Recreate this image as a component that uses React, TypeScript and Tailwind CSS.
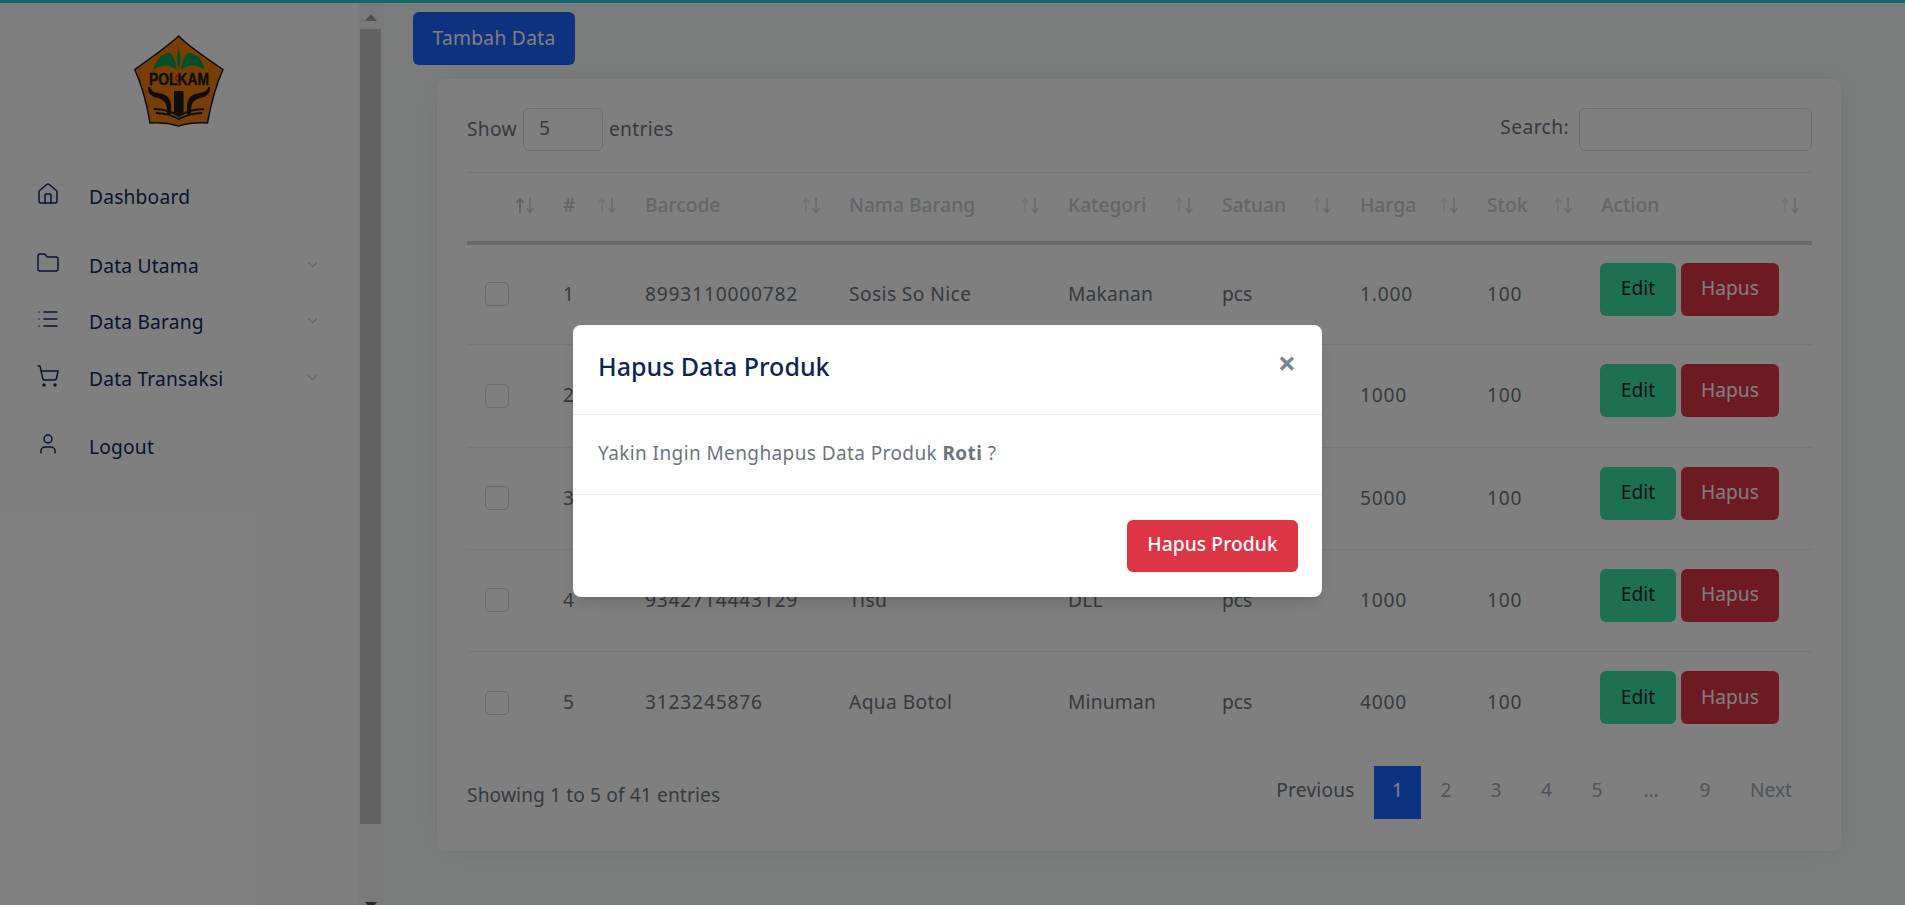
import { ChevronDown, Folder, House, List, ShoppingCart, User } from "lucide-react";

const rows = [
  { no: 1, barcode: "8993110000782", nama: "Sosis So Nice", kategori: "Makanan", satuan: "pcs", harga: "1.000", stok: 100 },
  { no: 2, barcode: "8992761136208", nama: "Roti", kategori: "Makanan", satuan: "pcs", harga: "1000", stok: 100 },
  { no: 3, barcode: "8886008101053", nama: "Sabun Mandi", kategori: "DLL", satuan: "pcs", harga: "5000", stok: 100 },
  { no: 4, barcode: "9342714443129", nama: "Tisu", kategori: "DLL", satuan: "pcs", harga: "1000", stok: 100 },
  { no: 5, barcode: "3123245876", nama: "Aqua Botol", kategori: "Minuman", satuan: "pcs", harga: "4000", stok: 100 },
];

const columns = [
  { label: "", width: "w-[80px]" },
  { label: "#", width: "w-[82px]" },
  { label: "Barcode", width: "w-[204px]" },
  { label: "Nama Barang", width: "w-[219px]" },
  { label: "Kategori", width: "w-[154px]" },
  { label: "Satuan", width: "w-[138px]" },
  { label: "Harga", width: "w-[127px]" },
  { label: "Stok", width: "w-[114px]" },
  { label: "Action", width: "w-[227px]" },
];

const pages = [
  { label: "2", className: "w-[50px]" },
  { label: "3", className: "w-[50px]" },
  { label: "4", className: "w-[51px]" },
  { label: "5", className: "w-[50px]" },
  { label: "…", className: "w-[58px] text-[#212529]" },
  { label: "9", className: "w-[50px]" },
];

function Logo() {
  return (
    <svg viewBox="0 0 120 120" className="w-[120px] h-[120px]">
      <path d="M58.700 16 Q68 26 103 49.500 Q93 72 87.500 103 Q72 102 58.700 106 Q45 102 30 103 Q25 72 14.700 49.500 Q48 26 58.700 16Z" fill="#f07c08" stroke="#1a1a1a" strokeWidth="1.500" />
      <path d="M33 50 Q38 33 50 33 Q56 38 56.500 50 Q46 41 33 50Z" fill="#0f9a50" />
      <path d="M85 50 Q80 33 68 33 Q62 38 61 50 Q72 41 85 50Z" fill="#0f9a50" />
      <path d="M58.700 50 Q55 38 58.700 28 Q62.500 38 58.700 50Z" fill="#0f9a50" />
      <text x="59" y="65" textAnchor="middle" fontFamily="'Liberation Sans', sans-serif" fontSize="16" fontWeight="700" fill="#1a1a1a" stroke="#1a1a1a" strokeWidth="0.400" textLength="60" lengthAdjust="spacingAndGlyphs">POLKAM</text>
      <path d="M55 58 L60 53 M55 58 L60 64" stroke="#c0262d" strokeWidth="1.200" fill="none" />
      <path d="M54 71 H63.500 V95 H54Z M28 67 Q27 76 38 78 Q46 80 47 88 V94 H51 V85 Q50 74 38 73 Q31 72 30 67Z M90 67 Q91 76 80 78 Q72 80 71 88 V94 H67 V85 Q68 74 80 73 Q87 72 88 67Z" fill="#1a1a1a" />
      <path d="M34 88 Q48 88 58.700 95 Q70 88 84 88 V90 Q70 90 58.700 97 Q48 90 34 90Z M36 92 Q48 92 58.700 98 Q70 92 82 92 V94 Q70 94 58.700 100 Q48 94 36 94Z" fill="#1a1a1a" />
    </svg>
  );
}

function SortArrows({ active }: { active?: boolean }) {
  return (
    <span className="absolute right-[12px] top-[24px] flex">
      <svg viewBox="0 0 10 18" className={`w-[10px] h-[17px] ${active ? "text-[#bcc2c7]" : "text-[#e6e9ec]"}`} fill="none" stroke="currentColor" strokeWidth="1.800">
        <path d="M5 17V2M1.500 6 5 1.500 8.500 6" />
      </svg>
      <svg viewBox="0 0 10 18" className="w-[10px] h-[17px] text-[#d3d8dc]" fill="none" stroke="currentColor" strokeWidth="1.800">
        <path d="M5 1v15M1.500 12 5 16.500 8.500 12" />
      </svg>
    </span>
  );
}

function MenuItem({ icon, label, arrow, className }: { icon: React.ReactNode; label: string; arrow?: boolean; className?: string }) {
  return (
    <div className={`flex items-center h-14 pl-9 pr-[37px] ${className ?? ""}`}>
      <span className="w-[53px] -mt-1.5 text-[#14275f]">{icon}</span>
      <span className="flex-1 text-[19.2px] tracking-[0.2px] text-[#14275f]">{label}</span>
      {arrow && <ChevronDown size={17} strokeWidth={1.5} className="text-[#c4c4c4] -mt-1" />}
    </div>
  );
}

export default function App() {
  return (
    <div className="relative h-[905px] overflow-hidden bg-[#f7faf9] font-['Noto_Sans',sans-serif] text-[19.2px] text-[#6c757d]">
      <div className="h-[3px] bg-[#26ccdc]" />
      <div className="flex h-[902px]">
        {/* Sidebar */}
        <aside className="w-[358px] bg-white shrink-0">
          <div className="flex justify-center pt-[17px] pl-[2px]">
            <Logo />
          </div>
          <nav className="mt-[29px]">
            <MenuItem icon={<House size={24} strokeWidth={1.5} />} label="Dashboard" />
            <MenuItem className="mt-[13px]" icon={<Folder size={24} strokeWidth={1.5} />} label="Data Utama" arrow />
            <MenuItem icon={<List size={24} strokeWidth={1.5} />} label="Data Barang" arrow />
            <MenuItem className="mt-px" icon={<ShoppingCart size={24} strokeWidth={1.5} />} label="Data Transaksi" arrow />
            <MenuItem className="mt-3" icon={<User size={24} strokeWidth={1.5} />} label="Logout" />
          </nav>
        </aside>

        {/* Scrollbar */}
        <div className="w-[27px] shrink-0 bg-[#f4f4f4] flex flex-col pl-0.5 justify-between">
          <div className="flex flex-col w-[21px] items-center">
            <svg viewBox="0 0 12 7" className="w-3 h-[7px] mt-[11px] text-[#a0a0a0]" fill="currentColor"><path d="M6 0l6 7H0z" /></svg>
            <div className="w-[21px] h-[795px] mt-2 bg-[#c6c6c6]" />
          </div>
          <div className="flex w-[21px] justify-center">
            <svg viewBox="0 0 12 7" className="w-3 h-[7px] -mb-1 text-[#505050]" fill="currentColor"><path d="M0 0h12L6 7z" /></svg>
          </div>
        </div>

        {/* Main */}
        <main className="flex-1 min-w-0">
          <button className="ml-7 mt-[9px] w-[162px] h-[53px] rounded-md bg-[#1a65ff] text-white tracking-[0.3px] pb-[1px]">Tambah Data</button>

          <section className="ml-[51px] mr-[63px] mt-[13px] h-[774px] bg-white rounded-lg pl-[30px] pr-[29px] pt-[29px] shadow-[0_0_30px_rgba(0,0,0,0.05)] border border-[#f0f0f0]">
            <div className="flex items-start justify-between h-[43px]">
              <label className="flex items-center gap-[6px] pb-0.5 tracking-[0.3px]">
                Show
                <span className="w-[80px] h-[43px] border border-[#d9dee3] rounded-md pl-[15px] flex items-center pb-0.5">5</span>
                entries
              </label>
              <label className="flex items-center gap-[10px]">
                <span className="pb-1 tracking-[0.4px]">Search:</span>
                <span className="block w-[233px] h-[43px] border border-[#d9dee3] rounded-md" />
              </label>
            </div>

            <table className="mt-[21px] w-full table-fixed border-collapse">
              <thead>
                <tr className="h-[70px] border-t border-[#e8ebee] border-b-4 border-b-[#cfd4da]">
                  {columns.map((col, i) => (
                    <th key={col.label} className={`${col.width} relative text-left font-medium text-[#c4ccd3] pl-4 pb-0.5`}>
                      {col.label}
                      <SortArrows active={i === 0} />
                    </th>
                  ))}
                </tr>
              </thead>
              <tbody>
                {rows.map((row) => (
                  <tr key={row.no} className="h-[102.25px] border-b border-[#eceff1] last:border-b-0">
                    <td className="pl-[18px]"><span className="block w-6 h-6 border border-[#cfd4da] rounded-[5px] bg-white" /></td>
                    <td className="pl-4">{row.no}</td>
                    <td className="pl-4 tracking-[0.8px]">{row.barcode}</td>
                    <td className="pl-4 tracking-[0.4px]">{row.nama}</td>
                    <td className="pl-4 tracking-[0.2px]">{row.kategori}</td>
                    <td className="pl-4">{row.satuan}</td>
                    <td className="pl-4 tracking-[0.8px]">{row.harga}</td>
                    <td className="pl-4 tracking-[0.8px]">{row.stok}</td>
                    <td className="pl-[15px]">
                      <div className="flex gap-[5px] mb-2.5">
                        <button className="w-[76px] h-[53px] rounded-md bg-[#3ce0a4] text-[#212529] pb-[1px]">Edit</button>
                        <button className="w-[98px] h-[53px] rounded-md bg-[#dc3545] text-white pb-[1px]">Hapus</button>
                      </div>
                    </td>
                  </tr>
                ))}
              </tbody>
            </table>

            <div className="flex items-start justify-between mt-[12px]">
              <p className="mt-[15px] tracking-[0.1px]">Showing 1 to 5 of 41 entries</p>
              <div className="flex h-[53px] items-center">
                <span className="w-[117px] text-center pb-1 tracking-[0.2px]">Previous</span>
                <span className="w-[47px] h-full flex items-center justify-center bg-[#1a65ff] text-white pb-1">1</span>
                {pages.map((p) => (
                  <span key={p.label} className={`${p.className} text-center text-[#a0a9b3] pb-1`}>{p.label}</span>
                ))}
                <span className="w-[82px] text-center text-[#a0a9b3] pb-1">Next</span>
              </div>
            </div>
          </section>
        </main>
      </div>

      {/* Modal backdrop */}
      <div className="absolute inset-0 bg-black/50" />

      <div className="absolute left-[573px] top-[325px] w-[749px] h-[272px] bg-white rounded-lg flex flex-col shadow-lg">
        <div className="h-[90px] shrink-0 border-b border-[#e9ecef] flex justify-between pl-[25px] pr-[26px] pt-[26px]">
          <h2 className="text-[25px] leading-none pt-[3px] font-medium text-[#0b2559]">Hapus Data Produk</h2>
          <span className="text-[32px] leading-none -mt-1 font-bold text-[#7d8489]">×</span>
        </div>
        <div className="h-[80px] shrink-0 border-b border-[#e9ecef] pl-[25px] pt-[24px] text-[19px] tracking-[0.4px]">
          Yakin Ingin Menghapus Data Produk <b>Roti</b> ?
        </div>
        <div className="flex-1 flex justify-end items-start pr-6 pt-[25px]">
          <button className="w-[171px] h-[52px] rounded-md bg-[#dc3545] text-white font-medium tracking-[0.1px] pb-1">Hapus Produk</button>
        </div>
      </div>
    </div>
  );
}
